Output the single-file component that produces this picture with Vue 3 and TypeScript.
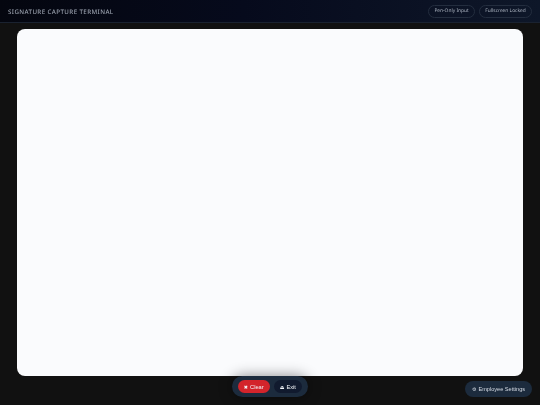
<script setup lang="ts">
const badges: string[] = ['Pen-Only Input', 'Fullscreen Locked']
</script>

<template>
  <div class="terminal">
    <header class="topbar">
      <h1 class="title">SIGNATURE CAPTURE TERMINAL</h1>
      <div class="badges">
        <span v-for="b in badges" :key="b" class="badge">{{ b }}</span>
      </div>
    </header>
    <main class="stage">
      <div class="pad"></div>
    </main>
    <div class="dock">
      <button class="btn clear"><span class="ic">✖</span> Clear</button>
      <button class="btn exit"><span class="ic">⏏</span> Exit</button>
    </div>
    <button class="settings"><span class="ic">⚙</span> Employee Settings</button>
  </div>
</template>

<style>
html, body { margin: 0; background: #111; }
</style>

<style scoped>
.terminal {
  position: relative;
  width: 540px;
  height: 405px;
  overflow: hidden;
  display: flex;
  flex-direction: column;
  background: #111;
  font-family: "Liberation Sans", Arial, sans-serif;
  text-rendering: geometricPrecision;
  will-change: transform;
}
.topbar {
  height: 23px;
  flex: none;
  box-sizing: border-box;
  display: flex;
  align-items: center;
  justify-content: space-between;
  padding: 0 8px;
  background: linear-gradient(90deg, #04060f 0%, #060a1c 45%, #0e1729 100%);
  border-bottom: 1px solid #1a2230;
}
.title {
  margin: 0;
  font-family: "Noto Sans", sans-serif;
  font-size: 6.2px;
  font-weight: 500;
  letter-spacing: 0.4px;
  color: #9aa1ae;
}
.badges { display: flex; gap: 4px; }
.badge {
  height: 13px;
  box-sizing: border-box;
  display: flex;
  align-items: center;
  padding: 0 5.3px;
  border: 1px solid #232d3e;
  border-radius: 7px;
  font-family: "Noto Sans", sans-serif;
  font-size: 4.85px;
  color: #a9b1be;
}
.stage {
  flex: 1;
  padding: 6px 17px 29px;
  display: flex;
  min-height: 0;
}
.pad {
  flex: 1;
  background: #fafbfd;
  border-radius: 8px;
}
.dock {
  position: absolute;
  left: 232px;
  top: 376px;
  width: 76px;
  height: 21px;
  box-sizing: border-box;
  padding: 0 6px;
  display: flex;
  align-items: center;
  gap: 4.5px;
  border-radius: 11px;
  background: #1c2b3d;
  box-shadow: 0 0 14px rgba(0, 0, 0, .45);
}
.btn {
  border: 0;
  height: 13px;
  padding: 0;
  border-radius: 7px;
  color: #f4f6fa;
  font-family: "Liberation Sans", Arial, sans-serif;
  font-size: 5.7px;
  display: flex;
  align-items: center;
  justify-content: center;
  gap: 2px;
}
.clear { width: 31.5px; background: #d3242b; }
.exit { width: 27.5px; background: #111a2e; }
.ic { font-family: "DejaVu Sans", sans-serif; font-size: 5px; }
.settings {
  position: absolute;
  left: 465px;
  top: 381px;
  width: 67px;
  height: 16px;
  padding: 0;
  border: 0;
  border-radius: 8px;
  background: #1c2b3d;
  color: #d5dbe4;
  font-family: "Liberation Sans", Arial, sans-serif;
  font-size: 5.6px;
  display: flex;
  align-items: center;
  justify-content: center;
  gap: 2px;
}
</style>
